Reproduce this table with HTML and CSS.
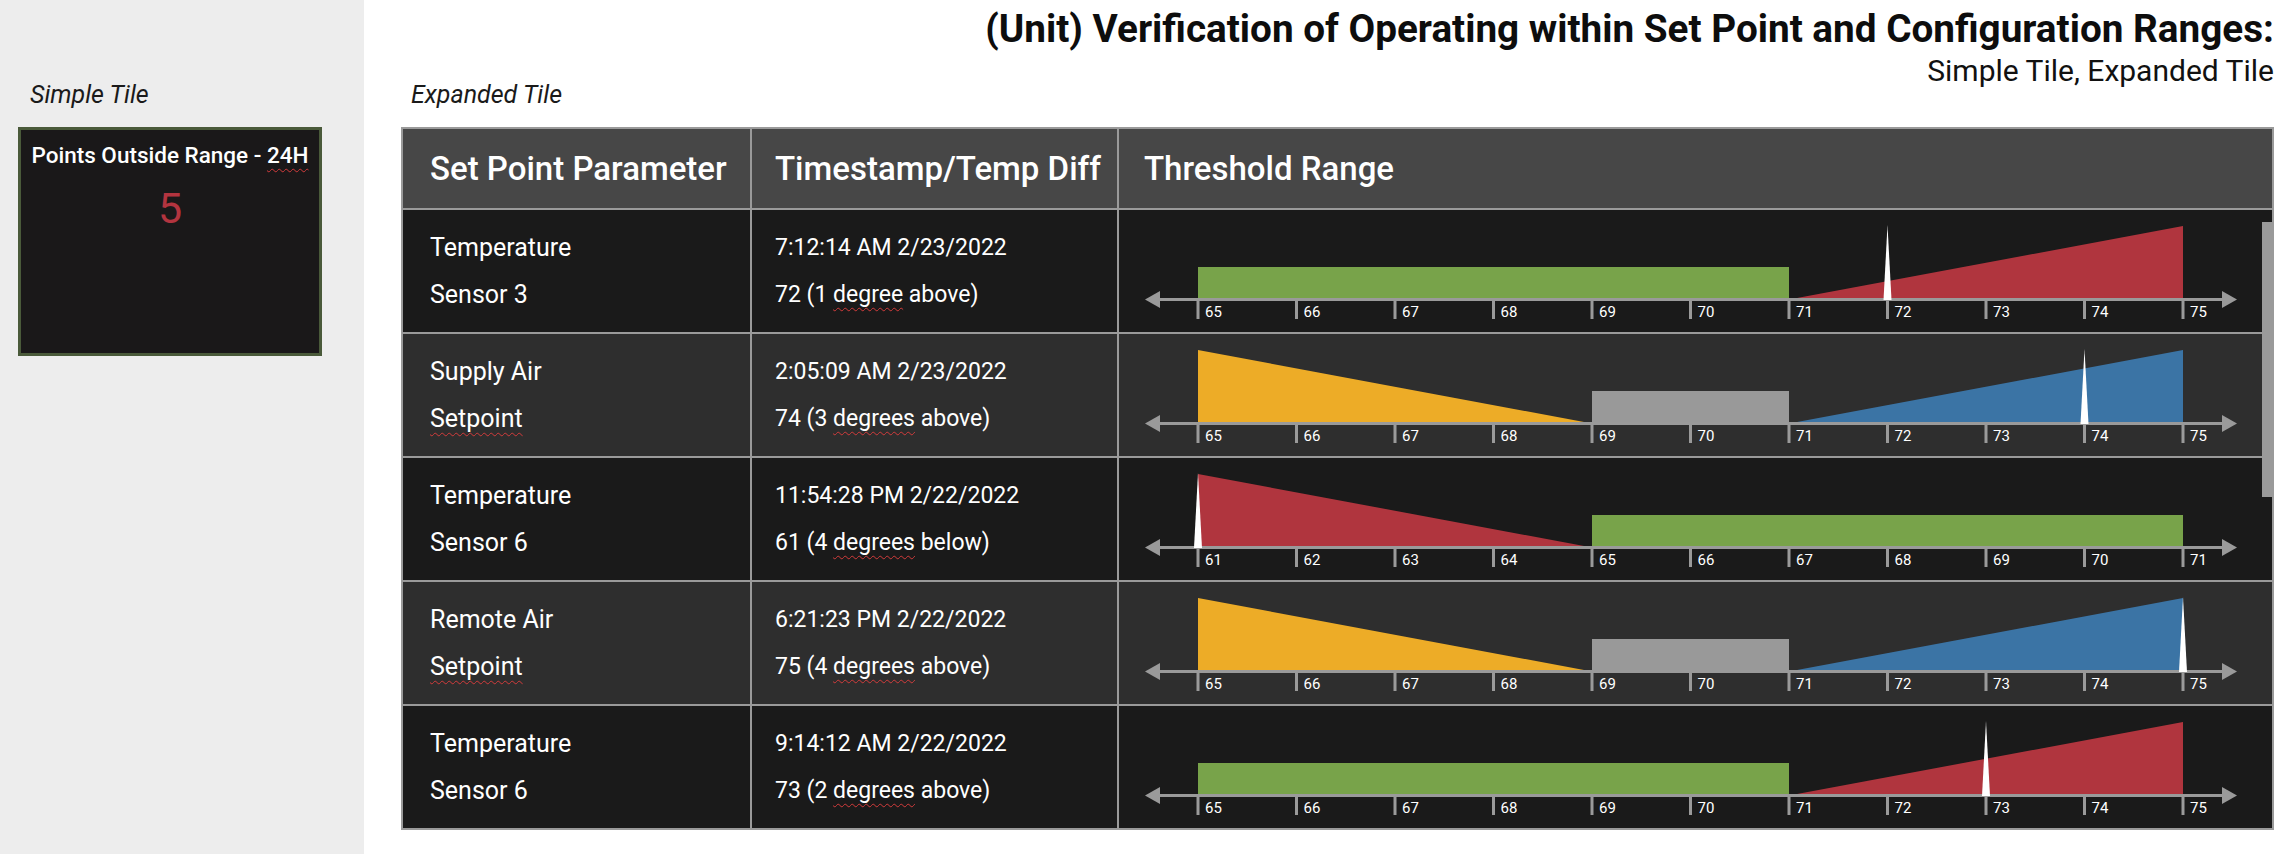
FILE: index.html
```html
<!DOCTYPE html>
<html lang="en">
<head>
<meta charset="utf-8">
<title>Verification of Operating within Set Point and Configuration Ranges</title>
<link rel="stylesheet" href="styles.css">
</head>
<body>
<div class="page">
  <aside class="sidebar">
    <div class="caption">Simple Tile</div>
    <div class="tile">
      <div class="tile-title">Points Outside Range - <span class="spell">24H</span></div>
      <div class="tile-value">5</div>
    </div>
  </aside>
  <main class="main">
    <header class="heading">
      <h1 class="title">(Unit) Verification of Operating within Set Point and Configuration Ranges:</h1>
      <div class="subtitle">Simple Tile, Expanded Tile</div>
    </header>
    <div class="caption caption-main">Expanded Tile</div>
    <div class="table-wrap">
      <div class="table">
        <div class="th">Set Point Parameter</div>
        <div class="th">Timestamp/Temp Diff</div>
        <div class="th th-range">Threshold Range</div>

        <!-- Row 1 -->
        <div class="td dark name"><span>Temperature</span><span>Sensor 3</span></div>
        <div class="td dark stamp"><span>7:12:14 AM 2/23/2022</span><span>72 (1 <span class="spell">degree</span> above)</span></div>
        <div class="td dark chart">
          <svg viewBox="0 0 1153 122" width="1153" height="122">
            <rect class="c-green" x="79" y="57" width="591" height="32.5"/>
            <polygon class="c-red" points="670,89.5 1064,16 1064,89.5"/>
            <line class="axis" x1="40" y1="89.5" x2="1104" y2="89.5"/>
            <polygon class="arrow" points="26,89.5 41,81 41,98"/>
            <polygon class="arrow" points="1118,89.5 1103,81 1103,98"/>
            <g class="ticks">
              <rect x="77.5" y="89" width="3" height="20"/><rect x="176" y="89" width="3" height="20"/><rect x="274.5" y="89" width="3" height="20"/><rect x="373" y="89" width="3" height="20"/><rect x="471.5" y="89" width="3" height="20"/><rect x="570" y="89" width="3" height="20"/><rect x="668.5" y="89" width="3" height="20"/><rect x="767" y="89" width="3" height="20"/><rect x="865.5" y="89" width="3" height="20"/><rect x="964" y="89" width="3" height="20"/><rect x="1062.5" y="89" width="3" height="20"/>
            </g>
            <g class="labels">
              <text x="86" y="107">65</text><text x="184.5" y="107">66</text><text x="283" y="107">67</text><text x="381.5" y="107">68</text><text x="480" y="107">69</text><text x="578.5" y="107">70</text><text x="677" y="107">71</text><text x="775.5" y="107">72</text><text x="874" y="107">73</text><text x="972.5" y="107">74</text><text x="1071" y="107">75</text>
            </g>
            <polygon class="needle" points="764.5,90 768.5,15 772.5,90"/>
          </svg>
        </div>

        <!-- Row 2 -->
        <div class="td light name"><span>Supply Air</span><span class="spell">Setpoint</span></div>
        <div class="td light stamp"><span>2:05:09 AM 2/23/2022</span><span>74 (3 <span class="spell">degrees</span> above)</span></div>
        <div class="td light chart">
          <svg viewBox="0 0 1153 122" width="1153" height="122">
            <polygon class="c-yellow" points="79,16 79,89.5 473,89.5"/>
            <rect class="c-gray" x="473" y="57" width="197" height="32.5"/>
            <polygon class="c-blue" points="670,89.5 1064,16 1064,89.5"/>
            <line class="axis" x1="40" y1="89.5" x2="1104" y2="89.5"/>
            <polygon class="arrow" points="26,89.5 41,81 41,98"/>
            <polygon class="arrow" points="1118,89.5 1103,81 1103,98"/>
            <g class="ticks">
              <rect x="77.5" y="89" width="3" height="20"/><rect x="176" y="89" width="3" height="20"/><rect x="274.5" y="89" width="3" height="20"/><rect x="373" y="89" width="3" height="20"/><rect x="471.5" y="89" width="3" height="20"/><rect x="570" y="89" width="3" height="20"/><rect x="668.5" y="89" width="3" height="20"/><rect x="767" y="89" width="3" height="20"/><rect x="865.5" y="89" width="3" height="20"/><rect x="964" y="89" width="3" height="20"/><rect x="1062.5" y="89" width="3" height="20"/>
            </g>
            <g class="labels">
              <text x="86" y="107">65</text><text x="184.5" y="107">66</text><text x="283" y="107">67</text><text x="381.5" y="107">68</text><text x="480" y="107">69</text><text x="578.5" y="107">70</text><text x="677" y="107">71</text><text x="775.5" y="107">72</text><text x="874" y="107">73</text><text x="972.5" y="107">74</text><text x="1071" y="107">75</text>
            </g>
            <polygon class="needle" points="961.5,90 965.5,15 969.5,90"/>
          </svg>
        </div>

        <!-- Row 3 -->
        <div class="td dark name"><span>Temperature</span><span>Sensor 6</span></div>
        <div class="td dark stamp"><span>11:54:28 PM 2/22/2022</span><span>61 (4 <span class="spell">degrees</span> below)</span></div>
        <div class="td dark chart">
          <svg viewBox="0 0 1153 122" width="1153" height="122">
            <polygon class="c-red" points="79,16 79,89.5 473,89.5"/>
            <rect class="c-green" x="473" y="57" width="591" height="32.5"/>
            <line class="axis" x1="40" y1="89.5" x2="1104" y2="89.5"/>
            <polygon class="arrow" points="26,89.5 41,81 41,98"/>
            <polygon class="arrow" points="1118,89.5 1103,81 1103,98"/>
            <g class="ticks">
              <rect x="77.5" y="89" width="3" height="20"/><rect x="176" y="89" width="3" height="20"/><rect x="274.5" y="89" width="3" height="20"/><rect x="373" y="89" width="3" height="20"/><rect x="471.5" y="89" width="3" height="20"/><rect x="570" y="89" width="3" height="20"/><rect x="668.5" y="89" width="3" height="20"/><rect x="767" y="89" width="3" height="20"/><rect x="865.5" y="89" width="3" height="20"/><rect x="964" y="89" width="3" height="20"/><rect x="1062.5" y="89" width="3" height="20"/>
            </g>
            <g class="labels">
              <text x="86" y="107">61</text><text x="184.5" y="107">62</text><text x="283" y="107">63</text><text x="381.5" y="107">64</text><text x="480" y="107">65</text><text x="578.5" y="107">66</text><text x="677" y="107">67</text><text x="775.5" y="107">68</text><text x="874" y="107">69</text><text x="972.5" y="107">70</text><text x="1071" y="107">71</text>
            </g>
            <polygon class="needle" points="75,90 79,15 83,90"/>
          </svg>
        </div>

        <!-- Row 4 -->
        <div class="td light name"><span>Remote Air</span><span class="spell">Setpoint</span></div>
        <div class="td light stamp"><span>6:21:23 PM 2/22/2022</span><span>75 (4 <span class="spell">degrees</span> above)</span></div>
        <div class="td light chart">
          <svg viewBox="0 0 1153 122" width="1153" height="122">
            <polygon class="c-yellow" points="79,16 79,89.5 473,89.5"/>
            <rect class="c-gray" x="473" y="57" width="197" height="32.5"/>
            <polygon class="c-blue" points="670,89.5 1064,16 1064,89.5"/>
            <line class="axis" x1="40" y1="89.5" x2="1104" y2="89.5"/>
            <polygon class="arrow" points="26,89.5 41,81 41,98"/>
            <polygon class="arrow" points="1118,89.5 1103,81 1103,98"/>
            <g class="ticks">
              <rect x="77.5" y="89" width="3" height="20"/><rect x="176" y="89" width="3" height="20"/><rect x="274.5" y="89" width="3" height="20"/><rect x="373" y="89" width="3" height="20"/><rect x="471.5" y="89" width="3" height="20"/><rect x="570" y="89" width="3" height="20"/><rect x="668.5" y="89" width="3" height="20"/><rect x="767" y="89" width="3" height="20"/><rect x="865.5" y="89" width="3" height="20"/><rect x="964" y="89" width="3" height="20"/><rect x="1062.5" y="89" width="3" height="20"/>
            </g>
            <g class="labels">
              <text x="86" y="107">65</text><text x="184.5" y="107">66</text><text x="283" y="107">67</text><text x="381.5" y="107">68</text><text x="480" y="107">69</text><text x="578.5" y="107">70</text><text x="677" y="107">71</text><text x="775.5" y="107">72</text><text x="874" y="107">73</text><text x="972.5" y="107">74</text><text x="1071" y="107">75</text>
            </g>
            <polygon class="needle" points="1060,90 1064,15 1068,90"/>
          </svg>
        </div>

        <!-- Row 5 -->
        <div class="td dark name"><span>Temperature</span><span>Sensor 6</span></div>
        <div class="td dark stamp"><span>9:14:12 AM 2/22/2022</span><span>73 (2 <span class="spell">degrees</span> above)</span></div>
        <div class="td dark chart">
          <svg viewBox="0 0 1153 122" width="1153" height="122">
            <rect class="c-green" x="79" y="57" width="591" height="32.5"/>
            <polygon class="c-red" points="670,89.5 1064,16 1064,89.5"/>
            <line class="axis" x1="40" y1="89.5" x2="1104" y2="89.5"/>
            <polygon class="arrow" points="26,89.5 41,81 41,98"/>
            <polygon class="arrow" points="1118,89.5 1103,81 1103,98"/>
            <g class="ticks">
              <rect x="77.5" y="89" width="3" height="20"/><rect x="176" y="89" width="3" height="20"/><rect x="274.5" y="89" width="3" height="20"/><rect x="373" y="89" width="3" height="20"/><rect x="471.5" y="89" width="3" height="20"/><rect x="570" y="89" width="3" height="20"/><rect x="668.5" y="89" width="3" height="20"/><rect x="767" y="89" width="3" height="20"/><rect x="865.5" y="89" width="3" height="20"/><rect x="964" y="89" width="3" height="20"/><rect x="1062.5" y="89" width="3" height="20"/>
            </g>
            <g class="labels">
              <text x="86" y="107">65</text><text x="184.5" y="107">66</text><text x="283" y="107">67</text><text x="381.5" y="107">68</text><text x="480" y="107">69</text><text x="578.5" y="107">70</text><text x="677" y="107">71</text><text x="775.5" y="107">72</text><text x="874" y="107">73</text><text x="972.5" y="107">74</text><text x="1071" y="107">75</text>
            </g>
            <polygon class="needle" points="863,90 867,15 871,90"/>
          </svg>
        </div>
      </div>
      <div class="scrollbar"></div>
    </div>
  </main>
</div>
</body>
</html>
```
FILE: styles.css
```css
* { box-sizing: border-box; }
html, body { margin: 0; padding: 0; }
body {
  font-family: Roboto, "Liberation Sans", Arial, sans-serif;
  color: #111;
  background: #ffffff;
}
.page {
  display: flex;
  width: 2280px;
  height: 854px;
}
.sidebar {
  width: 364px;
  flex: none;
  background: #ededed;
  padding-top: 81px;
}
.caption {
  font-style: italic;
  font-size: 25px;
  line-height: 28px;
  color: #1a1a1a;
  height: 28px;
  padding-left: 30px;
  margin-bottom: 18px;
}
.caption-main {
  padding-left: 10px;
}
.tile {
  margin-left: 18px;
  width: 304px;
  height: 229px;
  background: #1a1819;
  border: 3px solid #4a5a3a;
  padding-top: 12px;
  text-align: center;
}
.tile-title {
  font-size: 22.5px;
  line-height: 26px;
  font-weight: 500;
  color: #ffffff;
}
.tile-value {
  margin-top: 15px;
  font-size: 43px;
  line-height: 50px;
  color: #b3343f;
}
.spell {
  text-decoration: underline wavy #d23b3b;
  text-decoration-thickness: 1px;
  text-underline-offset: 5px;
}
.main {
  flex: 1;
  padding-left: 37px;
  padding-right: 6px;
}
.heading {
  text-align: right;
  padding-top: 7px;
}
.title {
  margin: 0;
  font-size: 38.7px;
  line-height: 44px;
  font-weight: 700;
  color: #0d0d0d;
}
.subtitle {
  margin-top: 10px;
  font-size: 30px;
  line-height: 20px;
  color: #111;
}
.table-wrap {
  position: relative;
}
.table {
  display: grid;
  grid-template-columns: 347px 365px 1fr;
  grid-template-rows: 79px repeat(5, 122px);
  gap: 2px;
  background: #9a9a9a;
  border: 2px solid #9a9a9a;
}
.th {
  background: #474747;
  color: #ffffff;
  font-size: 33px;
  font-weight: 500;
  display: flex;
  align-items: center;
  padding-left: 27px;
}
.th:nth-child(2) { padding-left: 23px; }
.th-range { padding-left: 25px; }
.td {
  color: #ffffff;
  display: flex;
  flex-direction: column;
  justify-content: center;
  font-size: 25px;
  line-height: 47px;
}
.dark { background: #1a1a1a; }
.light { background: #2e2e2e; }
.name { padding-left: 27px; }
.stamp { padding-left: 23px; font-size: 23px; }
.chart { display: block; overflow: hidden; }
.chart svg { display: block; }
.c-green { fill: #78a34a; }
.c-red { fill: #b0353e; }
.c-yellow { fill: #edac27; }
.c-gray { fill: #999999; }
.c-blue { fill: #3b74a5; }
.axis { stroke: #9a9a9a; stroke-width: 3; }
.arrow { fill: #9a9a9a; }
.ticks rect { fill: #9a9a9a; }
.labels text {
  fill: #ffffff;
  font-family: Roboto, "Liberation Sans", Arial, sans-serif;
  font-size: 15px;
}
.needle { fill: #ffffff; }
.scrollbar {
  position: absolute;
  left: 1861px;
  top: 95px;
  width: 12px;
  height: 275px;
  background: #9a9a9a;
}
```
